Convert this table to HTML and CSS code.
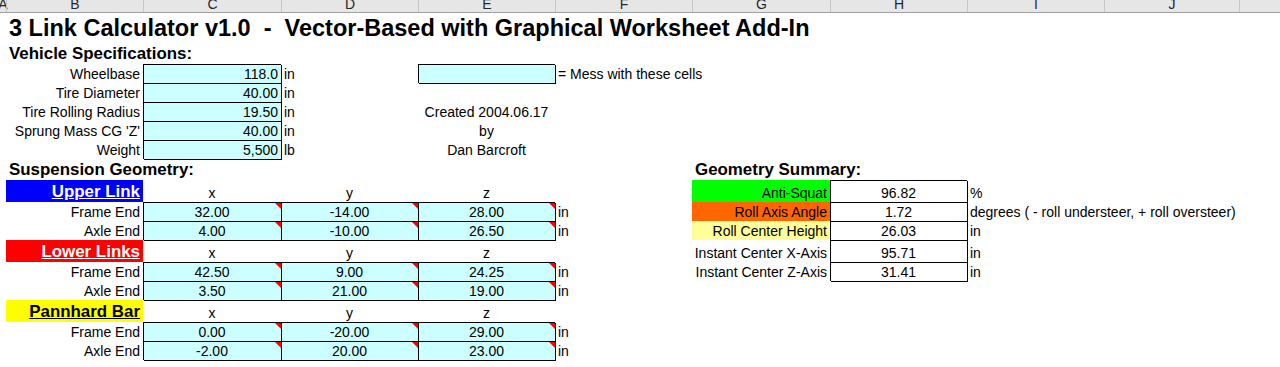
FILE: index.html
```html
<!DOCTYPE html>
<html>
<head>
<meta charset="utf-8">
<title>3 Link Calculator v1.0</title>
<link rel="stylesheet" href="styles.css">
</head>
<body>
<div class="sheet">
  <div class="colhead">
    <div class="ch first">A</div><div class="ch">B</div><div class="ch">C</div><div class="ch">D</div><div class="ch">E</div><div class="ch">F</div><div class="ch">G</div><div class="ch">H</div><div class="ch">I</div><div class="ch">J</div><div class="ch"></div>
  </div>

  <div class="row title-row"><div class="col-b title">3 Link Calculator v1.0  -  Vector-Based with Graphical Worksheet Add-In</div></div>
  <div class="row vspec-row"><div class="col-b h">Vehicle Specifications:</div></div>

  <div class="row r19"><div class="col-b r">Wheelbase</div><div class="col-c r in">118.0</div><div class="col-d">in</div><div class="col-e in"></div><div class="col-f">= Mess with these cells</div></div>
  <div class="row r19"><div class="col-b r">Tire Diameter</div><div class="col-c r in">40.00</div><div class="col-d">in</div></div>
  <div class="row r19"><div class="col-b r">Tire Rolling Radius</div><div class="col-c r in">19.50</div><div class="col-d">in</div><div class="col-e c">Created 2004.06.17</div></div>
  <div class="row r19"><div class="col-b r">Sprung Mass CG 'Z'</div><div class="col-c r in">40.00</div><div class="col-d">in</div><div class="col-e c">by</div></div>
  <div class="row r19"><div class="col-b r">Weight</div><div class="col-c r in">5,500</div><div class="col-d">lb</div><div class="col-e c">Dan Barcroft</div></div>

  <div class="row r21"><div class="col-b h">Suspension Geometry:</div><div class="col-g h">Geometry Summary:</div></div>

  <div class="row r22"><div class="col-b r h link blue">Upper Link</div><div class="col-c c">x</div><div class="col-d c">y</div><div class="col-e c">z</div><div class="col-g r green">Anti-Squat</div><div class="col-h c box">96.82</div><div class="col-i">%</div></div>
  <div class="row r19"><div class="col-b r">Frame End</div><div class="col-c c in flag">32.00</div><div class="col-d c in flag">-14.00</div><div class="col-e c in flag">28.00</div><div class="col-f">in</div><div class="col-g r orange">Roll Axis Angle</div><div class="col-h c box">1.72</div><div class="col-i">degrees ( - roll understeer, + roll oversteer)</div></div>
  <div class="row r19"><div class="col-b r">Axle End</div><div class="col-c c in flag">4.00</div><div class="col-d c in flag">-10.00</div><div class="col-e c in flag">26.50</div><div class="col-f">in</div><div class="col-g r pale">Roll Center Height</div><div class="col-h c box">26.03</div><div class="col-i">in</div></div>

  <div class="row r22"><div class="col-b r h link red">Lower Links</div><div class="col-c c">x</div><div class="col-d c">y</div><div class="col-e c">z</div><div class="col-g r">Instant Center X-Axis</div><div class="col-h c box">95.71</div><div class="col-i">in</div></div>
  <div class="row r19"><div class="col-b r">Frame End</div><div class="col-c c in flag">42.50</div><div class="col-d c in flag">9.00</div><div class="col-e c in flag">24.25</div><div class="col-f">in</div><div class="col-g r">Instant Center Z-Axis</div><div class="col-h c box">31.41</div><div class="col-i">in</div></div>
  <div class="row r19"><div class="col-b r">Axle End</div><div class="col-c c in flag">3.50</div><div class="col-d c in flag">21.00</div><div class="col-e c in flag">19.00</div><div class="col-f">in</div></div>

  <div class="row r22"><div class="col-b r h link yellow">Pannhard Bar</div><div class="col-c c">x</div><div class="col-d c">y</div><div class="col-e c">z</div></div>
  <div class="row r19"><div class="col-b r">Frame End</div><div class="col-c c in flag">0.00</div><div class="col-d c in flag">-20.00</div><div class="col-e c in flag">29.00</div><div class="col-f">in</div></div>
  <div class="row r19"><div class="col-b r">Axle End</div><div class="col-c c in flag">-2.00</div><div class="col-d c in flag">20.00</div><div class="col-e c in flag">23.00</div><div class="col-f">in</div></div>
</div>
</body>
</html>
```

FILE: styles.css
```css
* { box-sizing: border-box; }

html, body {
  margin: 0;
  padding: 0;
  background: #ffffff;
}

body {
  width: 1280px;
  height: 367px;
  overflow: hidden;
  font-family: "Liberation Sans", Arial, sans-serif;
  font-size: 14px;
  color: #000000;
}

.colhead,
.row {
  display: grid;
  grid-template-columns: 6px 137px 138px 137px 137px 137px 138px 137px 137px 135px 1fr;
}

/* column letter header */
.colhead {
  height: 13px;
  background: #e6e6e6;
  border-bottom: 1px solid #a0a0a0;
  overflow: hidden;
}

.ch {
  display: flex;
  justify-content: center;
  align-items: flex-start;
  border-left: 1px solid #c6c6c6;
  font-size: 14px;
  line-height: 9px;
  color: #262626;
  white-space: nowrap;
  min-width: 0;
}

.ch.first { border-left: none; }

/* rows */
.title-row { height: 31px; }
.vspec-row { height: 20px; }
.r19 { height: 19px; }
.r21 { height: 21px; }
.r22 { height: 22px; }

.row > div {
  display: flex;
  align-items: flex-end;
  justify-content: flex-start;
  padding: 0 3px 1px 3px;
  white-space: nowrap;
  min-width: 0;
  line-height: 16px;
}

.col-b { grid-column: 2; }
.col-c { grid-column: 3; }
.col-d { grid-column: 4; }
.col-e { grid-column: 5; }
.col-f { grid-column: 6; }
.col-g { grid-column: 7; }
.col-h { grid-column: 8; }
.col-i { grid-column: 9; }

.row > .title {
  grid-column: 2 / -1;
  font-size: 23.5px;
  font-weight: bold;
  line-height: 31px;
  padding-bottom: 1px;
  white-space: pre;
}

.row > .h {
  font-size: 16.9px;
  font-weight: bold;
  line-height: 19px;
}

.row > .r { justify-content: flex-end; }
.row > .c { justify-content: center; }

/* cells with borders */
.in {
  background: #ccffff;
  box-shadow: inset 1px 1px 0 #000000, 1px 1px 0 #000000;
}

.box {
  background: #ffffff;
  box-shadow: inset 1px 1px 0 #000000, 1px 1px 0 #000000;
}

/* comment indicator */
.flag { position: relative; }
.flag::after {
  content: "";
  position: absolute;
  top: 1px;
  right: 0;
  width: 0;
  height: 0;
  border-top: 6px solid #ff0000;
  border-left: 6px solid transparent;
}

/* coloured label cells */
.link { text-decoration: underline; }
.blue { background: #0000ff; color: #ffffff; }
.red { background: #ff0000; color: #ffffff; }
.yellow { background: #ffff00; color: #000000; }
.green { background: #00ff00; }
.orange { background: #ff6600; }
.pale { background: #ffff99; }
```
